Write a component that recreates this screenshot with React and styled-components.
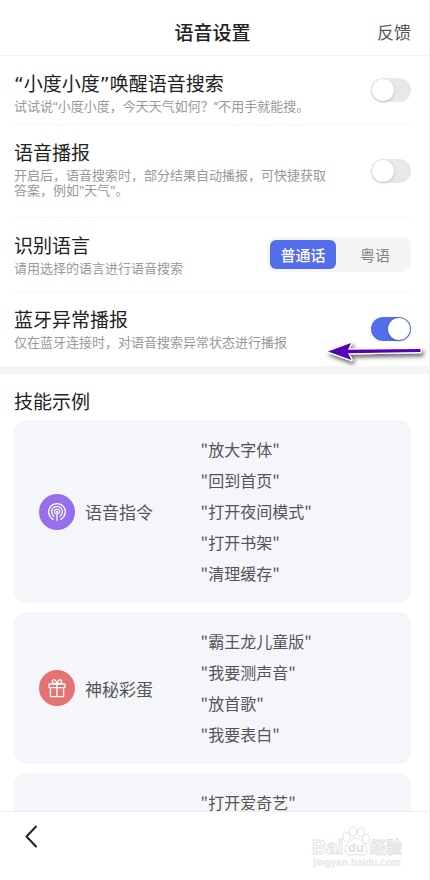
import React, { useState } from 'react';
import styled, { createGlobalStyle } from 'styled-components';

const GlobalStyle = createGlobalStyle`
  * {
    box-sizing: border-box;
  }

  body {
    margin: 0;
    background: #fff;
    color: #222;
    font-family: 'Noto Sans CJK SC', sans-serif;
  }
`;

const Page = styled.div`
  display: flex;
  flex-direction: column;
  height: 100vh;
  border-right: 1px solid #ececec;
`;

const Header = styled.header`
  display: grid;
  grid-template-columns: 1fr auto 1fr;
  align-items: center;
  flex-shrink: 0;
  padding: 14px 18px 5px 14px;
  border-bottom: 1px solid #f3f3f3;
`;

const Title = styled.h1`
  grid-column: 2;
  margin: 0;
  font-size: 19px;
  font-weight: 500;
  line-height: 36px;
`;

const Feedback = styled.a`
  justify-self: end;
  color: #555;
  font-size: 17px;
  line-height: 36px;
  text-decoration: none;
`;

const Content = styled.main`
  flex: 1;
  min-height: 0;
  overflow: hidden;
`;

const Settings = styled.section`
  position: relative;
  padding: 0 18px 0 14px;
  border-bottom: 8px solid #f5f5f5;
`;

const Row = styled.div`
  display: flex;
  align-items: center;
  justify-content: space-between;

  & + & {
    border-top: 1px solid #f5f5f5;
  }
`;

const RowText = styled.div`
  flex: 1;
  padding: 15px 36px ${props => props.$bottom}px 0;
`;

const RowTitle = styled.label`
  display: block;
  font-family: 'DejaVu Sans', 'Noto Sans CJK SC', sans-serif;
  font-size: 19px;
  line-height: 26px;
`;

const RowHint = styled.p`
  margin: 2px 0 0;
  color: #999;
  font-family: 'Noto Sans', 'Noto Sans CJK SC', sans-serif;
  font-size: 13px;
  line-height: 15px;
`;

const Switch = styled.input.attrs({ type: 'checkbox', role: 'switch' })`
  appearance: none;
  flex-shrink: 0;
  display: flex;
  width: 40px;
  height: 24px;
  margin: 0;
  padding: 1px;
  border-radius: 12px;
  background: #e8e8e8;
  cursor: pointer;

  &::before {
    content: '';
    width: 22px;
    height: 22px;
    border-radius: 50%;
    background: #fff;
    box-shadow: 0 1px 3px rgba(0, 0, 0, 0.2);
  }

  &:checked {
    justify-content: flex-end;
    background: #526eea;
  }
`;

const Segments = styled.div`
  display: flex;
  gap: 6px;
  padding: 3px;
  border-radius: 9px;
  background: #f5f5f5;
`;

const Segment = styled.label`
  width: 66px;
  border-radius: 6px;
  color: #858585;
  font-size: 15px;
  line-height: 29px;
  text-align: center;
  cursor: pointer;

  &:has(input:checked) {
    background: #526eea;
    color: #fff;
    font-weight: 500;
  }

  input {
    appearance: none;
    position: absolute;
    margin: 0;
  }
`;

const Arrow = styled.svg`
  position: absolute;
  right: 0;
  bottom: 0;
  pointer-events: none;
`;

const Skills = styled.section`
  display: flex;
  flex-direction: column;
  gap: 9px;
  padding: 16px 18px 14px 14px;
`;

const SkillsTitle = styled.h2`
  margin: 0;
  font-size: 19px;
  font-weight: 400;
  line-height: 21px;
`;

const Card = styled.article`
  display: flex;
  align-items: center;
  padding: 14px 0;
  border-radius: 12px;
  background: #f5f6fa;
`;

const Skill = styled.div`
  display: flex;
  align-items: center;
  gap: 10px;
  width: 47%;
  padding-left: 25px;
  color: #555;
  font-size: 17px;
`;

const Badge = styled.span`
  display: flex;
  align-items: center;
  justify-content: center;
  width: 36px;
  height: 36px;
  border-radius: 50%;
  background: ${props => props.$color};
`;

const Phrases = styled.ul`
  margin: 0;
  padding: 0;
  list-style: none;
  color: #555;
  font-size: 16px;
  line-height: 31px;
`;

const Footer = styled.footer`
  display: flex;
  align-items: flex-start;
  justify-content: space-between;
  flex-shrink: 0;
  padding: 12px 23px 10px 24px;
  border-top: 1px solid #efefef;
`;

const BackButton = styled.button`
  display: flex;
  padding: 0;
  border: 0;
  background: none;
  cursor: pointer;
`;

const VoiceIcon = () => (
  <svg width="20" height="20" viewBox="0 0 20 20" fill="none" stroke="#fff" strokeWidth="1.3" strokeLinecap="round">
    <path d="M6.2 17.3A8.3 8.3 0 1 1 13.8 17.3" />
    <path d="M6.9 14.2A5.4 5.4 0 1 1 13.1 14.2" />
    <path d="M8.3 11.6A2.6 2.6 0 1 1 11.7 11.6" />
    <circle cx="10" cy="9.7" r="1" fill="#fff" stroke="none" />
    <path d="M10 10v8.6" />
  </svg>
);

const GiftIcon = () => (
  <svg width="20" height="20" viewBox="0 0 20 20" fill="none" stroke="#fff" strokeWidth="1.3" strokeLinejoin="round">
    <rect x="2" y="6" width="16" height="3.6" rx="0.6" />
    <path d="M3.4 9.6V18a.7.7 0 0 0 .7.7h11.8a.7.7 0 0 0 .7-.7V9.6" />
    <path d="M10 6v12.7" />
    <path d="M9.8 5.8C7.4 5.9 5.2 5 5.3 3.2 5.5 1 9 .8 9.8 5.8z" />
    <path d="M10.2 5.8c2.4.1 4.6-.8 4.5-2.6C14.5 1 11 .8 10.2 5.8z" />
  </svg>
);

const Watermark = () => (
  <svg width="96" height="46" viewBox="0 0 96 46" fill="#fff" stroke="#e2e2e2" strokeWidth="1">
    <g fontFamily="'Liberation Sans', sans-serif" fontWeight="700">
      <text x="2" y="30" fontSize="20">Bai</text>
      <text x="3" y="42" fontSize="10" fill="#e6e6e6" stroke="none">jingyan.baidu.com</text>
    </g>
    <ellipse cx="36.5" cy="13" rx="3.6" ry="4.6" />
    <ellipse cx="43" cy="7.500" rx="3.6" ry="4.8" />
    <ellipse cx="51" cy="8" rx="3.6" ry="4.8" />
    <ellipse cx="56" cy="15" rx="3.4" ry="4.6" />
    <path d="M46 14c4 0 6 4 9 7 3 3 3 10-3 10-2 0-4-.5-6-.5s-4 .5-6 .5c-6 0-6-7-3-10 3-3 5-7 9-7z" />
    <text x="38" y="28" fontSize="13" fontWeight="700" fill="#dedede" stroke="none" fontFamily="'Liberation Sans', sans-serif">du</text>
    <text x="60" y="29" fontSize="16" fontWeight="700" fontFamily="'Noto Sans CJK SC', sans-serif">经验</text>
  </svg>
);

const skills = [
  {
    name: '语音指令',
    color: '#976fec',
    icon: <VoiceIcon />,
    phrases: ['放大字体', '回到首页', '打开夜间模式', '打开书架', '清理缓存']
  },
  {
    name: '神秘彩蛋',
    color: '#e57373',
    icon: <GiftIcon />,
    phrases: ['霸王龙儿童版', '我要测声音', '放首歌', '我要表白']
  },
  {
    phrases: ['打开爱奇艺']
  }
];

function App() {
  const [wake, setWake] = useState(false);
  const [broadcast, setBroadcast] = useState(false);
  const [bluetooth, setBluetooth] = useState(true);
  const [language, setLanguage] = useState('普通话');

  return (
    <Page>
      <GlobalStyle />
      <Header>
        <Title>语音设置</Title>
        <Feedback href="#feedback">反馈</Feedback>
      </Header>

      <Content>
        <Settings>
          <Row>
            <RowText $bottom={10}>
              <RowTitle htmlFor="wake">“小度小度”唤醒语音搜索</RowTitle>
              <RowHint>试试说“小度小度，今天天气如何？”不用手就能搜。</RowHint>
            </RowText>
            <Switch id="wake" checked={wake} onChange={e => setWake(e.target.checked)} />
          </Row>
          <Row>
            <RowText $bottom={19}>
              <RowTitle htmlFor="broadcast">语音播报</RowTitle>
              <RowHint>开启后，语音搜索时，部分结果自动播报，可快捷获取答案，例如"天气"。</RowHint>
            </RowText>
            <Switch
              id="broadcast"
              checked={broadcast}
              onChange={e => setBroadcast(e.target.checked)}
            />
          </Row>
          <Row>
            <RowText $bottom={15}>
              <RowTitle as="div" id="language">识别语言</RowTitle>
              <RowHint>请用选择的语言进行语音搜索</RowHint>
            </RowText>
            <Segments role="radiogroup" aria-labelledby="language">
              {['普通话', '粤语'].map(name => (
                <Segment key={name}>
                  <input
                    type="radio"
                    name="language"
                    checked={language === name}
                    onChange={() => setLanguage(name)}
                  />
                  {name}
                </Segment>
              ))}
            </Segments>
          </Row>
          <Row>
            <RowText $bottom={16}>
              <RowTitle htmlFor="bluetooth">蓝牙异常播报</RowTitle>
              <RowHint>仅在蓝牙连接时，对语音搜索异常状态进行播报</RowHint>
            </RowText>
            <Switch
              id="bluetooth"
              checked={bluetooth}
              onChange={e => setBluetooth(e.target.checked)}
            />
          </Row>
          <Arrow width="106" height="30" viewBox="0 0 106 30">
            <defs>
              <filter id="shadow" x="-10%" y="-50%" width="120%" height="220%">
                <feDropShadow dx="2" dy="3" stdDeviation="2" floodOpacity="0.6" />
              </filter>
            </defs>
            <path
              d="M5 15.500L28 7l-3 6.800L97.500 13v3L25 17.300 28.500 24z"
              fill="#5500bb"
              stroke="#fff"
              strokeWidth="2.500"
              strokeLinejoin="round"
              paintOrder="stroke"
              filter="url(#shadow)"
            />
          </Arrow>
        </Settings>

        <Skills>
          <SkillsTitle>技能示例</SkillsTitle>
          {skills.map(skill => (
            <Card key={skill.phrases[0]}>
              <Skill>
                {skill.icon && <Badge $color={skill.color}>{skill.icon}</Badge>}
                {skill.name}
              </Skill>
              <Phrases>
                {skill.phrases.map(phrase => (
                  <li key={phrase}>"{phrase}"</li>
                ))}
              </Phrases>
            </Card>
          ))}
        </Skills>
      </Content>

      <Footer>
        <BackButton aria-label="返回">
          <svg width="14" height="26" viewBox="0 0 14 26" fill="none" stroke="#222" strokeWidth="2">
            <path d="M12 2.500L2.500 12.500l9.500 10" strokeLinecap="round" strokeLinejoin="round" />
          </svg>
        </BackButton>
        <Watermark />
      </Footer>
    </Page>
  );
}

export default App;
